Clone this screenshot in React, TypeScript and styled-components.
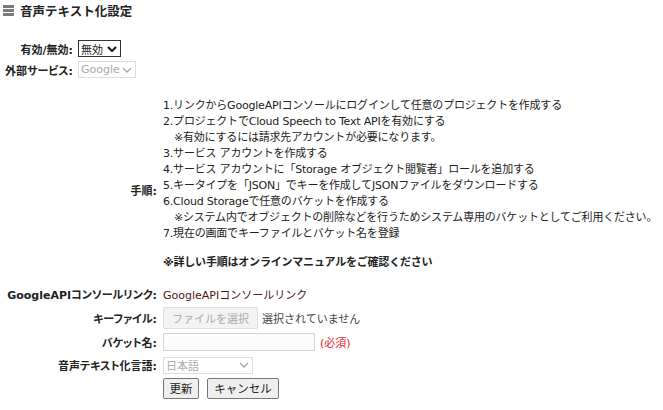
import styled, { createGlobalStyle } from 'styled-components';

const GlobalStyle = createGlobalStyle`
  body {
    margin: 0;
    font-family: "DejaVu Sans", "Noto Sans CJK JP", sans-serif;
    font-size: 11px;
    color: #333;
    background: #fff;
  }
`;

const Page = styled.div`
  width: 663px;
  height: 410px;
  overflow: hidden;
`;

const Title = styled.div`
  display: flex;
  align-items: center;
  gap: 6px;
  height: 17px;
  padding: 2px 0 0 3px;
  font-size: 12.5px;
  font-weight: bold;
  color: #222;
`;

const MenuIcon = styled.span`
  display: flex;
  flex-direction: column;
  gap: 1px;
  width: 11px;

  i {
    display: block;
    height: 3px;
    background: #7a7a7a;
  }
`;

const SwitchTable = styled.div`
  margin-top: 19px;
  display: grid;
  grid-template-columns: 73px auto;
  grid-auto-rows: 21px;
  column-gap: 5px;
  align-items: center;
`;

const Label = styled.div`
  text-align: right;
  font-weight: bold;
  white-space: nowrap;
  font-feature-settings: "palt";
  color: #222;
`;

const SelectBox = styled.div<{ $w: number; $disabled?: boolean }>`
  position: relative;
  width: ${(p) => p.$w}px;
  height: 17px;
  box-sizing: border-box;
  border: 1px solid ${(p) => (p.$disabled ? '#ddd' : '#333')};
  background: #fff;
  color: ${(p) => (p.$disabled ? '#aaa' : '#222')};
  display: flex;
  align-items: center;
  padding-left: 2px;
  justify-self: start;
`;

const Chevron = styled.svg`
  position: absolute;
  right: 3px;
  top: 50%;
  transform: translateY(-50%);
`;

const Form = styled.div`
  margin-top: 12px;
  display: flex;
  flex-direction: column;
`;

const Row = styled.div<{ $h?: number }>`
  display: flex;
  align-items: center;
  min-height: ${(p) => p.$h ?? 23}px;
`;

const RowLabel = styled(Label)<{ $shift?: number }>`
  width: 157px;
  flex-shrink: 0;
  margin-right: 6px;
  padding-top: ${(p) => p.$shift ?? 0}px;
`;

const Steps = styled.div`
  padding: 6px 0 10px 0;
  line-height: 16px;
  letter-spacing: -0.2px;
  white-space: nowrap;
  color: #222;
`;

const Note = styled.div`
  padding-left: 11px;
`;

const StrongNote = styled.div`
  margin-top: 13px;
  font-weight: bold;
`;

const Link = styled.a`
  color: #4b1414;
  text-decoration: none;
`;

const FileButton = styled.span`
  display: inline-flex;
  align-items: center;
  height: 22px;
  box-sizing: border-box;
  padding: 0 8px;
  border: 1px solid #dcdcdc;
  border-radius: 2px;
  background: #f3f3f3;
  color: #aaa;
`;

const Muted = styled.span`
  margin-left: 4px;
  color: #444;
`;

const TextInput = styled.input`
  width: 152px;
  height: 18px;
  box-sizing: border-box;
  border: 1px solid #d4d4d4;
  background: #fcfcfc;
  padding: 0 2px;
  margin: 0;
`;

const Required = styled.span`
  margin-left: 5px;
  color: #e8231f;
`;

const Buttons = styled.div`
  display: flex;
  gap: 8px;
`;

const Button = styled.button<{ $w: number }>`
  width: ${(p) => p.$w}px;
  height: 21px;
  padding: 0;
  box-sizing: border-box;
  border: 1px solid #767676;
  border-radius: 2px;
  background: #efefef;
  color: #222;
  font-family: inherit;
  font-size: 11.5px;
`;

function Select({ value, width, disabled }: { value: string; width: number; disabled?: boolean }) {
  return (
    <SelectBox $w={width} $disabled={disabled}>
      {value}
      <Chevron width="10" height="7" viewBox="0 0 10 7">
        <path d="M1 1.5 L5 5.5 L9 1.5" fill="none" stroke={disabled ? '#aaa' : '#111'} strokeWidth={disabled ? 1.4 : 2} />
      </Chevron>
    </SelectBox>
  );
}

export default function App() {
  return (
    <Page>
      <GlobalStyle />
      <Title>
        <MenuIcon>
          <i />
          <i />
          <i />
        </MenuIcon>
        音声テキスト化設定
      </Title>

      <SwitchTable>
        <Label>有効/無効:</Label>
        <Select value="無効" width={43} />
        <Label>外部サービス:</Label>
        <Select value="Google" width={58} disabled />
      </SwitchTable>

      <Form>
        <Row>
          <RowLabel $shift={6}>手順:</RowLabel>
          <Steps>
            <div>1.リンクからGoogleAPIコンソールにログインして任意のプロジェクトを作成する</div>
            <div>2.プロジェクトでCloud Speech to Text APIを有効にする</div>
            <Note>※有効にするには請求先アカウントが必要になります。</Note>
            <div>3.サービス アカウントを作成する</div>
            <div>4.サービス アカウントに「Storage オブジェクト閲覧者」ロールを追加する</div>
            <div>5.キータイプを「JSON」でキーを作成してJSONファイルをダウンロードする</div>
            <div>6.Cloud Storageで任意のバケットを作成する</div>
            <Note>※システム内でオブジェクトの削除などを行うためシステム専用のバケットとしてご利用ください。</Note>
            <div>7.現在の画面でキーファイルとバケット名を登録</div>
            <StrongNote>※詳しい手順はオンラインマニュアルをご確認ください</StrongNote>
          </Steps>
        </Row>
        <Row $h={25}>
          <RowLabel>GoogleAPIコンソールリンク:</RowLabel>
          <Link href="#">GoogleAPIコンソールリンク</Link>
        </Row>
        <Row $h={24}>
          <RowLabel>キーファイル:</RowLabel>
          <FileButton>ファイルを選択</FileButton>
          <Muted>選択されていません</Muted>
        </Row>
        <Row>
          <RowLabel>バケット名:</RowLabel>
          <TextInput />
          <Required>(必須)</Required>
        </Row>
        <Row $h={24}>
          <RowLabel>音声テキスト化言語:</RowLabel>
          <Select value="日本語" width={90} disabled />
        </Row>
        <Row $h={22}>
          <RowLabel />
          <Buttons>
            <Button $w={36}>更新</Button>
            <Button $w={72}>キャンセル</Button>
          </Buttons>
        </Row>
      </Form>
    </Page>
  );
}
